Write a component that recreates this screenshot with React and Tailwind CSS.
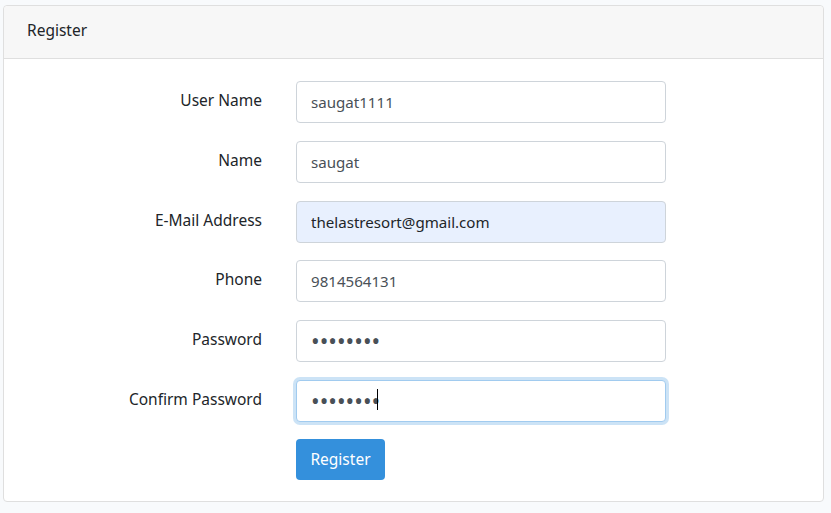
import React from "react";

const rows = [
  { label: "User Name", value: "saugat1111", type: "text" },
  { label: "Name", value: "saugat", type: "text" },
  { label: "E-Mail Address", value: "thelastresort@gmail.com", type: "email", autofill: true },
  { label: "Phone", value: "9814564131", type: "text" },
  { label: "Password", value: "12345678", type: "password" },
  { label: "Confirm Password", value: "12345678", type: "password", focus: true },
];

export default function App() {
  return (
    <div
      className="min-h-[513px] bg-[#f8fafc] pt-[5px] pl-[3px] pr-[7px] pb-[10px]"
      style={{ fontFamily: "'Noto Sans', sans-serif" }}
    >
      <div className="w-[821px] rounded-[4px] border border-[#dfdfdf] bg-white">
        <div className="flex h-[53px] items-center border-b border-[#dfdfdf] bg-[#f7f7f7] pl-[23px] pb-[3px] text-[15.5px] text-[#212529] rounded-t-[4px]">
          Register
        </div>
        <div className="flex flex-col gap-[17.8px] pt-[22px] pb-[21px]">
          {rows.map((r) => (
            <div key={r.label} className="flex items-center">
              <div className="w-[258px] text-right text-[15.5px] leading-[42px] text-[#212529] -translate-y-[2px]">
                {r.label}
              </div>
              <div className="ml-[34px] relative">
                <input
                  type={r.type}
                  defaultValue={r.value}
                  readOnly
                  className={
                    "block h-[42px] w-[370px] rounded-[4px] border px-[14px] outline-none " +
                    (r.type === "password" ? "text-[23px] " : "text-[15.1px] ") +
                    (r.autofill ? "bg-[#e8f0fe] text-[#212529] " : "bg-white text-[#495057] ") +
                    (r.focus
                      ? "border-[#a1cbef] shadow-[0_0_0_3px_rgba(52,144,220,0.25)]"
                      : "border-[#ced4da]")
                  }
                  style={{ fontFamily: "'Noto Sans', sans-serif" }}
                />
                {r.focus && (
                  <span className="absolute left-[81px] top-[9px] h-[21px] w-px bg-black" />
                )}
              </div>
            </div>
          ))}
          <div className="flex">
            <div className="w-[258px]" />
            <button className="ml-[34px] -mt-[1px] h-[41px] w-[89px] rounded-[4px] bg-[#3490dc] text-[15.5px] text-white">
              Register
            </button>
          </div>
        </div>
      </div>
    </div>
  );
}
